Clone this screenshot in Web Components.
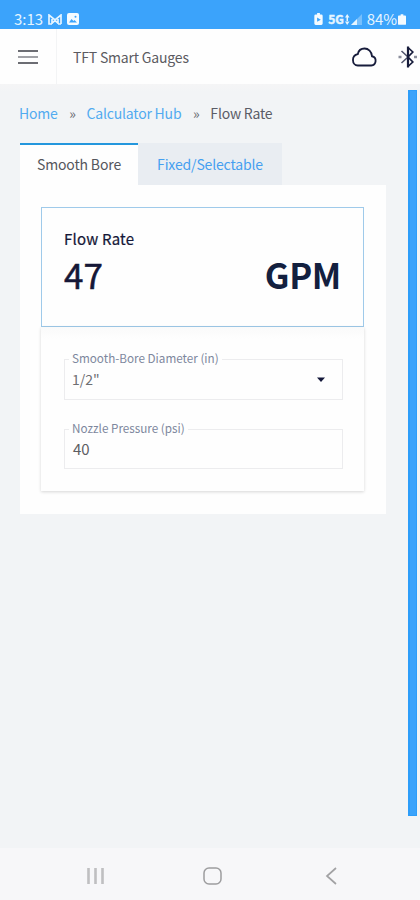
<!DOCTYPE html>
<html lang="en">
<head>
<meta charset="utf-8">
<title>TFT Smart Gauges</title>
<style>
html, body
{
    margin: 0;
    height: 900px;
    overflow: hidden;
}
body
{
    display: flex;
    flex-direction: column;
    background: #f2f4f6;
    color: #54565e;
    font-family: "Noto Sans CJK SC", "Noto Sans CJK JP", "Open Sans", sans-serif;
    font-size: 14px;
    line-height: 20px;
}
</style>
</head>
<body>

<status-bar time="3:13" battery="84%"></status-bar>
<app-header>TFT Smart Gauges</app-header>
<app-main>
    <bread-crumbs>
        <crumb-link>Home</crumb-link>
        <crumb-link>Calculator Hub</crumb-link>
        <crumb-link current>Flow Rate</crumb-link>
    </bread-crumbs>
    <tab-bar>
        <tab-item active>Smooth Bore</tab-item>
        <tab-item>Fixed/Selectable</tab-item>
    </tab-bar>
    <calc-panel>
        <result-card label="Flow Rate" value="47" unit="GPM"></result-card>
        <input-card>
            <outlined-field label="Smooth-Bore Diameter (in)" select>1/2"</outlined-field>
            <outlined-field label="Nozzle Pressure (psi)">40</outlined-field>
        </input-card>
    </calc-panel>
</app-main>
<nav-buttons></nav-buttons>

<script>
// builds the shadow root of an element from its markup
class BaseElement extends HTMLElement
{
    constructor()
    {
        super();

        const template = document.createElement("template");
        template.innerHTML = this.constructor.markup;

        this.attachShadow( { mode: "open" } );
        this.shadowRoot.appendChild(template.content.cloneNode(true));
    }

    setText(selector, attribute)
    {
        this.shadowRoot.querySelector(selector).textContent = this.getAttribute(attribute);
    }
}

// ------------------------------ STATUS BAR ------------------------------

class StatusBar extends BaseElement
{
    static markup = `
    <style>
    :host
    {
        display: flex;
        align-items: flex-end;
        flex: none;
        box-sizing: border-box;
        height: 29px;
        padding: 0 14px 0 14px;
        background: #3ba3fb;
        color: #e6f5ff;
        font-size: 15px;
        line-height: 21px;
    }
    svg { display: block; margin-bottom: 4px; }
    .time { width: 30px; }
    .mail { margin: 0 5px 4px 4px; }
    .gap { flex: 1; }
    .net
    {
        margin: 0 1px 0 5px;
        font-size: 12px;
        font-weight: bold;
        line-height: 20px;
        -webkit-text-stroke: 0.4px #e6f5ff;
    }
    .battery { margin: 0 1px 0 5px; letter-spacing: -0.1px; }
    </style>
    <span class="time"></span>
    <svg class="mail" width="14" height="11" viewBox="0 0 14 11" fill="none" stroke="#e6f5ff" stroke-width="1.7">
        <path d="M1 10V1l6 5 6-5v9M4 10V5M10 10V5M1 1v9h3M13 10h-3M4 9l3-2.500 3 2.500"/>
    </svg>
    <svg width="12" height="12" viewBox="0 0 12 12">
        <rect width="12" height="12" rx="2" fill="#f4fbff"/>
        <path d="M2 9.500 4.500 6l2 2 1-1L10 9.500z" fill="#3ba3fb"/>
        <circle cx="8.500" cy="3.700" r="1" fill="#3ba3fb"/>
    </svg>
    <span class="gap"></span>
    <svg width="9" height="12" viewBox="0 0 9 13">
        <path d="M3 0h3v1.500h1.500a1.500 1.500 0 0 1 1.500 1.500v8.500a1.500 1.500 0 0 1-1.500 1.500h-6A1.500 1.500 0 0 1 0 11.500V3a1.500 1.500 0 0 1 1.500-1.500H3z" fill="#f4fbff"/>
        <path d="M3 5 7 7.300 3 9.600z" fill="#3ba3fb"/>
    </svg>
    <span class="net">5G</span>
    <svg width="5" height="11" viewBox="0 0 5 11" fill="#e6f5ff">
        <path d="M0 3.500 2.200 0l2.300 3.500zM0 7.500 2.200 11l2.300-3.500zM1.500 3h1.500v5H1.500z"/>
    </svg>
    <svg width="12" height="11" viewBox="0 0 12 11">
        <path d="M12 0v11H1z" fill="#77bffc"/>
        <path d="M7 5v6H1z" fill="#e6f5ff"/>
    </svg>
    <span class="battery"></span>
    <svg width="8" height="11" viewBox="0 0 9 12" fill="#f4fbff">
        <path d="M3 0h3v1.500h2a1 1 0 0 1 1 1V11a1 1 0 0 1-1 1H1a1 1 0 0 1-1-1V2.500a1 1 0 0 1 1-1h2z"/>
    </svg>
    `;

    connectedCallback()
    {
        this.setText(".time", "time");
        this.setText(".battery", "battery");
    }
}

// ------------------------------ APP HEADER ------------------------------

class AppHeader extends BaseElement
{
    static markup = `
    <style>
    :host
    {
        display: flex;
        align-items: center;
        flex: none;
        height: 55px;
        background: #fefefe;
    }
    .menu
    {
        display: flex;
        align-items: center;
        box-sizing: border-box;
        width: 57px;
        height: 100%;
        padding-left: 18px;
        border-right: 1px solid #f3f4f5;
    }
    .title
    {
        flex: 1;
        padding: 1px 0 0 16px;
        color: #5b5b61;
        letter-spacing: -0.18px;
    }
    svg { display: block; flex: none; }
    .cloud { margin-right: 21px; }
    .bluetooth { margin-right: 2px; }
    </style>
    <div class="menu">
        <svg width="20" height="16" viewBox="0 0 20 16" stroke-width="2">
            <path d="M0 2h20M0 14h20" stroke="#6c6d73"/>
            <path d="M0 8h20" stroke="#a0a1a6"/>
        </svg>
    </div>
    <div class="title"><slot></slot></div>
    <svg class="cloud" width="25" height="20" viewBox="0 0 26 20" preserveAspectRatio="none" fill="none" stroke="#171c3b" stroke-width="1.900">
        <path d="M6 18.500h14a4.700 4.700 0 0 0 .8-9.300C20.500 4.500 17 1.500 13 1.500c-3.600 0-6.200 2-7 5.600C3 7.700 1 10 1 13c0 3.200 2.200 5.500 5 5.500z"/>
    </svg>
    <svg class="bluetooth" width="20" height="22" viewBox="0 0 20 22" fill="none" stroke="#171c3b">
        <path d="M10 1.500 14.800 6 10 11l4.800 5-4.800 4.500" stroke-width="1.700"/>
        <path d="M3.500 5 10 11l-6.500 6" stroke="#50546b" stroke-width="1.500"/>
        <path d="M10 .5v21" stroke-width="2.200"/>
        <path d="M.5 11h3M16 11h3" stroke="#8b8e9c" stroke-width="2.600"/>
    </svg>
    `;
}

// ------------------------------ MAIN AREA ------------------------------

class AppMain extends BaseElement
{
    static markup = `
    <style>
    :host
    {
        display: flex;
        flex: 1;
        min-height: 0;
        background: linear-gradient(#f5f5f6, #f2f4f6 8px);
    }
    .content { flex: 1; padding: 19px 22px 0 20px; }
    .scrollbar
    {
        box-sizing: border-box;
        width: 9px;
        height: 726px;
        margin: 6px 3px 0 0;
        border: solid #2d9df9;
        border-width: 1px 1px 1px 2px;
        background: #3ba3fb;
    }
    </style>
    <div class="content"><slot></slot></div>
    <div class="scrollbar"></div>
    `;
}

class BreadCrumbs extends BaseElement
{
    static markup = `
    <style>
    :host { display: flex; height: 40px; margin-left: -1px; letter-spacing: -0.2px; }
    </style>
    <slot></slot>
    `;
}

class CrumbLink extends BaseElement
{
    static markup = `
    <style>
    :host { display: flex; color: #51abf0; }
    :host([current]) { color: #5b5c66; }
    .sep { width: 28px; padding-left: 1px; text-align: center; color: #66676e; }
    :host([current]) .sep { display: none; }
    </style>
    <slot></slot><span class="sep">»</span>
    `;
}

// ------------------------------ TABS ------------------------------

class TabBar extends BaseElement
{
    static markup = `
    <style>
    :host { display: flex; letter-spacing: -0.15px; }
    </style>
    <slot></slot>
    `;
}

class TabItem extends BaseElement
{
    static markup = `
    <style>
    :host
    {
        display: flex;
        align-items: center;
        justify-content: center;
        box-sizing: border-box;
        width: 144px;
        height: 42px;
        background: #e9edf2;
        color: #459ff0;
    }
    :host([active])
    {
        width: 118px;
        border-top: 2px solid #2497dd;
        background: #fefefe;
        color: #55565c;
        padding-bottom: 2px;
    }
    </style>
    <slot></slot>
    `;
}

class CalcPanel extends BaseElement
{
    static markup = `
    <style>
    :host
    {
        display: block;
        box-sizing: border-box;
        height: 329px;
        padding: 22px 22px 0 21px;
        background: #fefefe;
    }
    </style>
    <slot></slot>
    `;
}

// ------------------------------ RESULT CARD ------------------------------

class ResultCard extends BaseElement
{
    static markup = `
    <style>
    :host
    {
        display: block;
        box-sizing: border-box;
        height: 120px;
        padding: 21px 22px 0;
        border: 1px solid #9fcaea;
        background: #fefefe;
        color: #151737;
    }
    .label { font-size: 15px; letter-spacing: 0.2px; -webkit-text-stroke: 0.2px #151737; }
    .row
    {
        display: flex;
        justify-content: space-between;
        margin-top: 3px;
        font-size: 35px;
        line-height: 44px;
    }
    .value { -webkit-text-stroke: 0.5px #151737; }
    .unit { font-weight: bold; font-size: 34.5px; letter-spacing: -0.3px; color: #13203f; }
    </style>
    <div class="label"></div>
    <div class="row"><span class="value"></span><span class="unit"></span></div>
    `;

    connectedCallback()
    {
        this.setText(".label", "label");
        this.setText(".value", "value");
        this.setText(".unit", "unit");
    }
}

// ------------------------------ INPUTS ------------------------------

class InputCard extends BaseElement
{
    static markup = `
    <style>
    :host
    {
        display: flex;
        flex-direction: column;
        gap: 20px;
        box-sizing: border-box;
        height: 164px;
        padding: 23px 21px 0 23px;
        background: linear-gradient(#fafafa, #fefefe 12px);
        box-shadow: 0 1px 3px rgba(0, 0, 0, 0.16);
    }
    </style>
    <slot></slot>
    `;
}

class OutlinedField extends BaseElement
{
    static markup = `
    <style>
    :host { display: block; height: 49px; }
    :host([select]) { height: 50px; }
    fieldset
    {
        box-sizing: border-box;
        height: 100%;
        min-width: 0;
        margin: 0;
        padding: 0 17px 0 7px;
        border: 1px solid #ececee;
    }
    legend
    {
        height: 18px;
        margin-left: -3px;
        padding: 0 3px;
        color: #7d879d;
        font-size: 11.7px;
        line-height: 15px;
    }
    .value
    {
        display: flex;
        align-items: center;
        justify-content: space-between;
        padding: 1px 0 0 1px;
        color: #5c5d62;
        font-size: 15px;
    }
    svg { display: none; }
    :host([select]) .value { padding-left: 0; font-size: 14px; color: #6e6f73; }
    :host([select]) svg { display: block; }
    </style>
    <fieldset>
        <legend></legend>
        <div class="value">
            <slot></slot>
            <svg width="8" height="5" viewBox="0 0 8 5"><path d="M0 .5h8L4 5z" fill="#14183a"/></svg>
        </div>
    </fieldset>
    `;

    connectedCallback()
    {
        this.setText("legend", "label");
    }
}

// ------------------------------ SYSTEM NAVIGATION ------------------------------

class NavButtons extends BaseElement
{
    static markup = `
    <style>
    :host
    {
        display: flex;
        flex: none;
        align-items: center;
        box-sizing: border-box;
        height: 52px;
        padding: 4px 0 0 86px;
        background: #f7f7f9;
    }
    svg { display: block; }
    .home { margin: 0 103px 0 98px; }
    </style>
    <svg width="19" height="18" viewBox="0 0 19 18" stroke="#bfbfc1" stroke-width="2.600"><path d="M2.500 1v16M9.500 1v16M16.500 1v16"/></svg>
    <svg class="home" width="19" height="18" viewBox="0 0 19 18" fill="none" stroke="#9d9d9f" stroke-width="1.500"><rect x="1" y="1" width="17" height="16" rx="5"/></svg>
    <svg width="13" height="18" viewBox="0 0 13 18" fill="none" stroke="#a2a2a4" stroke-width="1.700"><path d="M11 1 2 9l9 8"/></svg>
    `;
}

customElements.define("status-bar" , StatusBar);
customElements.define("app-header" , AppHeader);
customElements.define("app-main" , AppMain);
customElements.define("bread-crumbs" , BreadCrumbs);
customElements.define("crumb-link" , CrumbLink);
customElements.define("tab-bar" , TabBar);
customElements.define("tab-item" , TabItem);
customElements.define("calc-panel" , CalcPanel);
customElements.define("result-card" , ResultCard);
customElements.define("input-card" , InputCard);
customElements.define("outlined-field" , OutlinedField);
customElements.define("nav-buttons" , NavButtons);
</script>
</body>
</html>
